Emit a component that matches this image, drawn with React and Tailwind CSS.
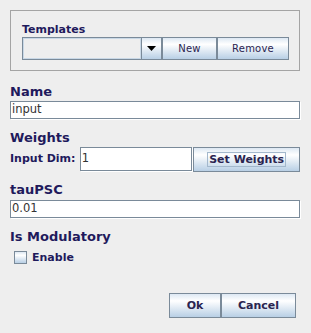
import React from "react";

const grad =
  "bg-[linear-gradient(to_bottom,#dde8f3_0%,#ffffff_30%,#b8cfe5_100%)]";

function Btn({ children, className = "", bold = false, focus = false }) {
  return (
    <div
      className={`flex items-center justify-center border border-[#7a8a99] ${grad} text-[#2a2450] ${
        bold ? "font-bold text-[11px]" : "text-[10px] tracking-[0.2px]"
      } ${className}`}
    >
      {focus ? (
        <span className="border border-[#a3b8cc] px-[1px] leading-[13px]">{children}</span>
      ) : (
        <span className="leading-[13px]">{children}</span>
      )}
    </div>
  );
}

function Field({ value, className = "" }) {
  return (
    <div
      className={`flex items-center border border-[#7a8a99] bg-white pl-[1px] text-[11.5px] text-[#333333] shadow-[1px_1px_0_#ffffff] ${className}`}
    >
      {value}
    </div>
  );
}

export default function App() {
  const label = "font-bold text-[13px] leading-[15px] text-[#1f1a5c]";
  return (
    <div
      className="w-[311px] h-[333px] bg-[#eeeeee] pl-[10px] pr-[11px] pt-[10px] flex flex-col"
      style={{ fontFamily: '"DejaVu Sans", sans-serif' }}
    >
      <div className="h-[61px] border border-[#a4a4a4] pl-[11px] pt-[12px]">
        <div className="font-bold text-[11px] leading-[13px] text-[#1f1a5c]">Templates</div>
        <div className="mt-[1px] flex h-[23px]">
          <div className="w-[120px] border border-[#7a8a99] bg-[#eeeeee] shadow-[inset_0_0_0_1px_#c9d8e6]"></div>
          <div className={`w-[20px] flex items-center justify-center border border-l-0 border-[#7a8a99] ${grad}`}>
            <svg width="9" height="5" viewBox="0 0 9 5">
              <path d="M0 0 H9 L4.5 5 Z" fill="#000000" />
            </svg>
          </div>
          <Btn className="w-[55px]">New</Btn>
          <Btn className="w-[72px]">Remove</Btn>
        </div>
      </div>

      <div className={`mt-[13px] ${label}`}>Name</div>
      <Field value="input" className="mt-[2px] h-[18px] w-[290px]" />

      <div className={`mt-[11px] ${label}`}>Weights</div>
      <div className="mt-[2px] flex h-[25px] items-start">
        <div className="w-[70px] h-[24px] flex items-center font-bold text-[11px] text-[#1f1a5c]">Input Dim:</div>
        <Field value="1" className="h-[24px] w-[113px]" />
        <Btn bold focus className="ml-[1px] h-[25px] w-[107px]">Set Weights</Btn>
      </div>

      <div className={`mt-[10px] ${label}`}>tauPSC</div>
      <Field value="0.01" className="mt-[3px] h-[18px] w-[290px]" />

      <div className={`mt-[11px] ${label}`}>Is Modulatory</div>
      <div className="mt-[6px] flex h-[15px] items-center pl-[4px]">
        <div className={`w-[13px] h-[13px] border border-[#7a8a99] ${grad}`}></div>
        <div className="ml-[5px] font-bold text-[11px] leading-[13px] text-[#1f1a5c]">Enable</div>
      </div>

      <div className="mt-[28px] flex justify-end pr-[4px]">
        <Btn bold className="h-[25px] w-[52px]">Ok</Btn>
        <Btn bold className="h-[25px] w-[75px]">Cancel</Btn>
      </div>
    </div>
  );
}
